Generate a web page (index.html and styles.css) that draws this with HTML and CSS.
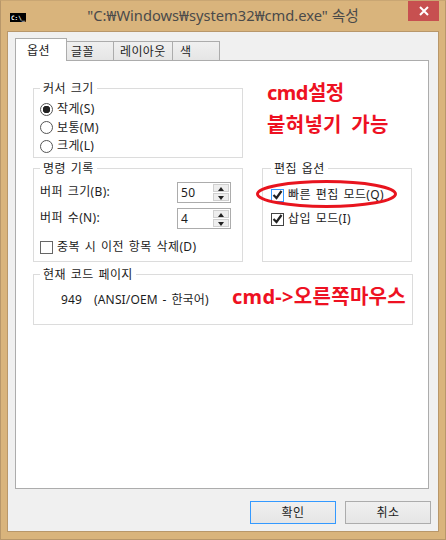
FILE: index.html
```html
<!DOCTYPE html>
<html lang="ko">
<head>
    <meta charset="UTF-8">
    <meta name="viewport" content="width=device-width, initial-scale=1.0">
    <title>cmd.exe 속성</title>
    <link rel="stylesheet" href="styles.css">
</head>
<body>
    <div class="window">
        <!-- Title bar -->
        <header class="titlebar">
            <span class="app-icon">C:\_</span>
            <h1 class="title">"C:₩Windows₩system32₩cmd.exe" 속성</h1>
            <button class="close" type="button">
                <svg width="10" height="10" viewBox="0 0 10 10"><path d="M1 1l8 8M9 1l-8 8" stroke="#fff" stroke-width="2"/></svg>
            </button>
        </header>

        <div class="client">
            <nav class="tabs">
                <a class="tab tab-active">옵션</a>
                <a class="tab tab-font">글꼴</a>
                <a class="tab tab-layout">레이아웃</a>
                <a class="tab tab-color">색</a>
            </nav>

            <main class="panel">
                <div class="row">
                    <fieldset class="group group-cursor">
                        <legend>커서 크기</legend>
                        <label class="option"><span class="radio radio-on"></span>작게(S)</label>
                        <label class="option"><span class="radio"></span>보통(M)</label>
                        <label class="option"><span class="radio"></span>크게(L)</label>
                    </fieldset>
                </div>

                <div class="row">
                    <fieldset class="group group-history">
                        <legend>명령 기록</legend>
                        <div class="field">
                            <span>버퍼 크기(B):</span>
                            <span class="spin"><span class="spin-value">50</span><span class="spin-btns"><i class="up"></i><i class="down"></i></span></span>
                        </div>
                        <div class="field">
                            <span>버퍼 수(N):</span>
                            <span class="spin"><span class="spin-value">4</span><span class="spin-btns"><i class="up"></i><i class="down"></i></span></span>
                        </div>
                        <label class="option option-dedupe"><span class="check"></span>중복 시 이전 항목 삭제(D)</label>
                    </fieldset>

                    <fieldset class="group group-edit">
                        <legend>편집 옵션</legend>
                        <label class="option option-edit"><span class="check check-focus"><svg width="11" height="10" viewBox="0 0 11 10"><path d="M1.5 5l3 3 5-7" fill="none" stroke="#222" stroke-width="2.2"/></svg></span>빠른 편집 모드(Q)</label>
                        <label class="option option-edit"><span class="check check-dark"><svg width="11" height="10" viewBox="0 0 11 10"><path d="M1.5 5l3 3 5-7" fill="none" stroke="#222" stroke-width="2.2"/></svg></span>삽입 모드(I)</label>
                    </fieldset>
                </div>

                <fieldset class="group group-code">
                    <legend>현재 코드 페이지</legend>
                    <div class="codepage"><span>949</span><span>(ANSI/OEM - 한국어)</span></div>
                </fieldset>

                <!-- annotations drawn over the screenshot -->
                <p class="note note-1">cmd설정</p>
                <p class="note note-2">붙혀넣기 가능</p>
                <p class="note note-3">cmd-&gt;오른쪽마우스</p>
                <svg class="circle" width="145" height="32" viewBox="0 0 145 32"><ellipse cx="72.5" cy="16" rx="69" ry="12.5" fill="none" stroke="#e8141e" stroke-width="3"/></svg>
            </main>

            <footer class="buttons">
                <button class="btn btn-default" type="button">확인</button>
                <button class="btn" type="button">취소</button>
            </footer>
        </div>
    </div>
</body>
</html>
```

FILE: styles.css
```css
* {
    box-sizing: border-box;
}
body {
    margin: 0;
    font-family: "Noto Sans", "Noto Sans CJK KR", sans-serif;
    font-size: 12px;
    line-height: 16px;
    letter-spacing: 0.35px;
    word-spacing: 1.5px;
    color: #1c1c1c;
}
.window {
    width: 446px;
    height: 540px;
    padding: 0 6px 7px;
    display: flex;
    flex-direction: column;
    background-color: #d9b47c;
    border: 1px solid #b8976a;
    border-top-color: #c9a673;
}
.titlebar {
    height: 30px;
    flex: none;
    display: flex;
    position: relative;
    justify-content: center;
}
.app-icon {
    position: absolute;
    left: 3px;
    top: 12px;
    width: 16px;
    height: 9px;
    background-color: #000;
    color: #fff;
    font-family: "DejaVu Sans Mono", monospace;
    font-size: 6px;
    font-weight: bold;
    line-height: 9px;
    letter-spacing: 0;
    padding-left: 1px;
    overflow: hidden;
}
.title {
    margin: 0;
    padding: 4px 0 0;
    font-size: 14.7px;
    font-weight: normal;
    line-height: 20px;
    letter-spacing: 0;
    word-spacing: 0;
    color: #4a4a4a;
}
.close {
    position: absolute;
    right: 0;
    top: 0;
    width: 31px;
    height: 20px;
    padding: 0;
    border: 0;
    background-color: #c75050;
    display: flex;
    align-items: center;
    justify-content: center;
}
.client {
    flex: 1;
    padding: 7px 9px 7px 7px;
    background-color: #f0f0f0;
    border: 1px solid #b8976a;
    display: flex;
    flex-direction: column;
}
.tabs {
    height: 22px;
    flex: none;
    display: flex;
    align-items: flex-end;
    position: relative;
    z-index: 1;
    margin-bottom: -1px;
}
.tab {
    height: 20px;
    padding: 2px 0 0 4px;
    background: linear-gradient(#f0f0f0, #e5e5e5);
    border: 1px solid #acacac;
    border-bottom: 1px solid #acacac;
    margin-left: -1px;
}
.tab-active {
    height: 23px;
    width: 52px;
    margin-left: 0;
    padding: 4px 0 0 11px;
    background: #fff;
    border-bottom: 0;
    z-index: 1;
}
.tab-font {
    width: 48px;
}
.tab-layout {
    width: 60px;
    padding-left: 6px;
}
.tab-color {
    width: 48px;
    padding-left: 7px;
}
.panel {
    height: 429px;
    flex: none;
    position: relative;
    padding: 19px 15px 0 17px;
    background-color: #fff;
    border: 1px solid #acacac;
}
.row {
    display: flex;
    gap: 19px;
    margin-bottom: 2px;
}
.group {
    margin: 0;
    min-width: 0;
    padding: 0 0 0 6px;
    border: 1px solid #dcdcdc;
}
.group legend {
    height: 16px;
    padding: 2px 3px 0;
    line-height: 14px;
}
.group-cursor {
    width: 210px;
    height: 78px;
    padding-top: 4px;
}
.group-history {
    width: 210px;
    height: 102px;
    padding-top: 3px;
}
.group-edit {
    width: 150px;
    height: 102px;
    padding: 7px 0 0 8px;
}
.group-code {
    width: 380px;
    height: 59px;
    margin-top: 4px;
}
.option {
    display: flex;
    align-items: center;
    gap: 4px;
    height: 18.5px;
}
.option-edit {
    height: 24px;
}
.option-dedupe {
    margin-top: 7px;
}
.radio {
    width: 13px;
    height: 13px;
    flex: none;
    border: 1px solid #555;
    border-radius: 50%;
    background-color: #fff;
}
.radio-on {
    background: radial-gradient(circle, #222 0 3.5px, #fff 4px);
}
.check {
    width: 13px;
    height: 13px;
    flex: none;
    display: flex;
    align-items: center;
    justify-content: center;
    border: 1px solid #666;
    background-color: #fff;
}
.check-focus {
    border-color: #3399ff;
}
.check-dark {
    border-color: #444;
}
.field {
    height: 26px;
    display: flex;
    align-items: center;
    justify-content: space-between;
    padding-right: 11px;
}
.spin {
    width: 54px;
    height: 21px;
    display: flex;
    justify-content: space-between;
    padding: 1px 1px 1px 3px;
    border: 1px solid #acacac;
}
.spin-value {
    line-height: 18px;
}
.spin-btns {
    width: 16px;
    display: flex;
    flex-direction: column;
    gap: 1px;
}
.spin-btns i {
    flex: 1;
    display: block;
    border: 1px solid #d0d0d0;
    background-color: #eee;
    position: relative;
}
.spin-btns i::after {
    content: "";
    position: absolute;
    left: 4px;
    top: 2px;
    border-left: 3px solid transparent;
    border-right: 3px solid transparent;
}
.spin-btns .up::after {
    border-bottom: 4px solid #222;
}
.spin-btns .down::after {
    border-top: 4px solid #222;
}
.codepage {
    display: flex;
    gap: 12px;
    padding: 10px 0 0 21px;
    letter-spacing: 0.15px;
}
.note {
    position: absolute;
    margin: 0;
    font-size: 20px;
    font-weight: bold;
    line-height: 24px;
    letter-spacing: 0.3px;
    word-spacing: 4px;
    color: #ee1122;
    white-space: nowrap;
}
.note-1 {
    left: 251px;
    top: 20px;
    letter-spacing: -0.5px;
}
.note-2 {
    left: 251px;
    top: 52px;
}
.note-3 {
    left: 216px;
    top: 224px;
}
.circle {
    position: absolute;
    left: 238px;
    top: 117px;
}
.buttons {
    flex: 1;
    display: flex;
    justify-content: flex-end;
    align-items: flex-end;
    gap: 9px;
    margin-right: -2px;
}
.btn {
    width: 86px;
    height: 23px;
    padding: 0;
    font: inherit;
    letter-spacing: inherit;
    color: inherit;
    background: linear-gradient(#f0f0f0, #e5e5e5);
    border: 1px solid #acacac;
}
.btn-default {
    border-color: #3399ff;
}
```
